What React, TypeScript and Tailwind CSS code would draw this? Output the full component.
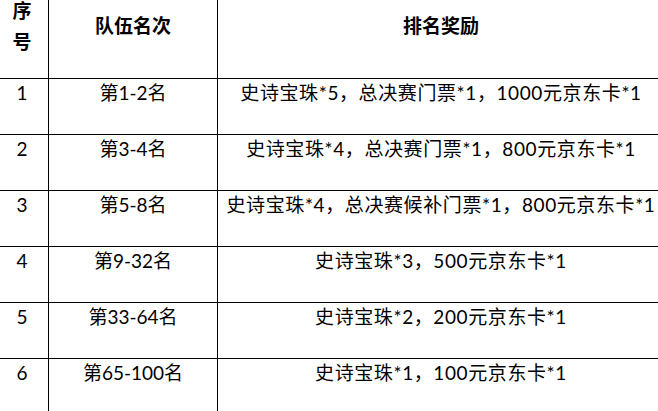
import React from "react";

const rows = [
  ["1", "第1-2名", "史诗宝珠*5，总决赛门票*1，1000元京东卡*1"],
  ["2", "第3-4名", "史诗宝珠*4，总决赛门票*1，800元京东卡*1"],
  ["3", "第5-8名", "史诗宝珠*4，总决赛候补门票*1，800元京东卡*1"],
  ["4", "第9-32名", "史诗宝珠*3，500元京东卡*1"],
  ["5", "第33-64名", "史诗宝珠*2，200元京东卡*1"],
  ["6", "第65-100名", "史诗宝珠*1，100元京东卡*1"],
];

export default function App() {
  return (
    <div
      className="w-[658px] h-[411px] overflow-hidden bg-white text-black"
      style={{ fontFamily: 'Lato, "Noto Sans CJK SC", sans-serif' }}
    >
      <div className="w-[664px] -mt-[27px] grid grid-cols-[49px_169px_446px]">
        <div className="h-[106px] border-r border-b border-black flex items-center justify-center pr-[4px]">
          <div className="font-bold text-[19px] leading-[31px] text-center w-[20px]">
            序号
          </div>
        </div>
        <div className="h-[106px] border-r border-b border-black flex items-center justify-center">
          <div className="font-bold text-[19px] leading-[31px]">队伍名次</div>
        </div>
        <div className="h-[106px] border-b border-black flex items-center justify-center">
          <div className="font-bold text-[19px] leading-[31px]">排名奖励</div>
        </div>
        {rows.map((r) => (
          <React.Fragment key={r[0]}>
            <div className="h-[56px] border-r border-b border-black text-center pr-[4px] text-[19px] leading-[28px]">
              {r[0]}
            </div>
            <div className="h-[56px] border-r border-b border-black text-center text-[19px] leading-[28px]">
              {r[1]}
            </div>
            <div className="h-[56px] border-b border-black text-center text-[19px] leading-[28px] whitespace-nowrap tracking-[0.6px]">
              {r[2]}
            </div>
          </React.Fragment>
        ))}
      </div>
    </div>
  );
}
